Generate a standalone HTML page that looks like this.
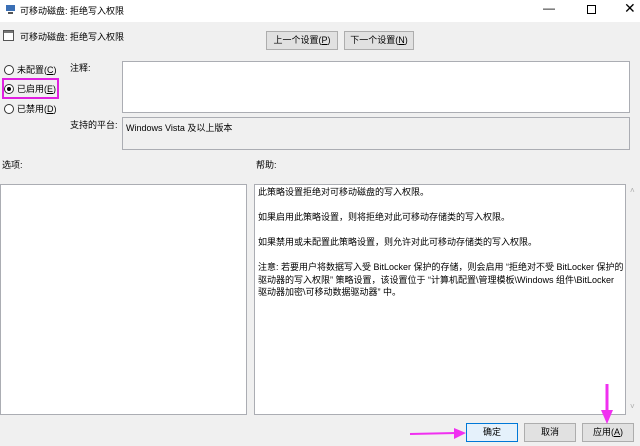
<!DOCTYPE html>
<html><head><meta charset="utf-8"><style>
*{margin:0;padding:0;box-sizing:border-box}
body{width:640px;height:446px;background:#f0f0f0;font-family:"Liberation Sans","Noto Sans CJK SC",sans-serif;font-size:9px;color:#000;position:relative;overflow:hidden}
.a{position:absolute;white-space:nowrap}
.btn{position:absolute;background:#e1e1e1;border:1px solid #adadad;text-align:center;font-size:9px;line-height:17px}
.box{position:absolute;background:#fff;border:1px solid #abadb3}
.r{position:absolute;width:10px;height:10px;border:1px solid #333;border-radius:50%;background:#fff}
u{text-decoration:underline}
</style></head><body>
<div class="a" style="left:0;top:0;width:640px;height:22px;background:#fff"></div>
<svg class="a" style="left:5px;top:4px" width="12" height="11"><rect x="1" y="1" width="9" height="6" fill="#3a6fb5"/><rect x="3" y="8" width="5" height="2" fill="#555"/></svg>
<div class="a" style="left:20px;top:4px">可移动磁盘: 拒绝写入权限</div>
<div class="a" style="left:543px;top:1px;font-size:12px">—</div>
<div class="a" style="left:587px;top:5px;width:9px;height:9px;border:1px solid #000"></div>
<div class="a" style="left:624px;top:0px;font-size:14px">✕</div>
<svg class="a" style="left:3px;top:30px" width="12" height="12"><rect x="0.5" y="0.5" width="10" height="10" fill="#fff" stroke="#555"/><rect x="1" y="1" width="9" height="2" fill="#777"/></svg>
<div class="a" style="left:20px;top:30px">可移动磁盘: 拒绝写入权限</div>
<div class="btn" style="left:266px;top:31px;width:72px;height:19px">上一个设置(<u>P</u>)</div>
<div class="btn" style="left:344px;top:31px;width:70px;height:19px">下一个设置(<u>N</u>)</div>
<div class="r" style="left:4px;top:65px"></div><div class="a" style="left:17px;top:63px">未配置(<u>C</u>)</div>
<div class="r" style="left:4px;top:84px"><div style="position:absolute;left:2px;top:2px;width:4px;height:4px;border-radius:50%;background:#000"></div></div><div class="a" style="left:17px;top:82px">已启用(<u>E</u>)</div>
<div class="a" style="left:2px;top:78px;width:57px;height:21px;border:2px solid #e020e0"></div>
<div class="r" style="left:4px;top:104px"></div><div class="a" style="left:17px;top:102px">已禁用(<u>D</u>)</div>
<div class="a" style="left:70px;top:61px">注释:</div>
<div class="box" style="left:122px;top:61px;width:508px;height:52px"></div>
<div class="a" style="left:70px;top:118px">支持的平台:</div>
<div class="box" style="left:122px;top:117px;width:508px;height:33px;background:#f0f0f0"></div>
<div class="a" style="left:126px;top:121px">Windows Vista 及以上版本</div>
<div class="a" style="left:2px;top:158px">选项:</div>
<div class="a" style="left:256px;top:158px">帮助:</div>
<div class="box" style="left:0;top:184px;width:247px;height:231px"></div>
<div class="box" style="left:254px;top:184px;width:372px;height:231px"></div>
<div class="a" style="left:626px;top:184px;width:14px;height:231px;background:#f0f0f0"></div>
<div class="a" style="left:630px;top:186px;color:#aaa;font-size:8px">˄</div>
<div class="a" style="left:630px;top:402px;color:#aaa;font-size:8px">˅</div>
<div class="a" style="left:258px;top:186px;line-height:12.5px;font-size:9px;white-space:normal;width:368px">此策略设置拒绝对可移动磁盘的写入权限。<br><br>如果启用此策略设置，则将拒绝对此可移动存储类的写入权限。<br><br>如果禁用或未配置此策略设置，则允许对此可移动存储类的写入权限。<br><br>注意: 若要用户将数据写入受 BitLocker 保护的存储，则会启用 “拒绝对不受 BitLocker 保护的<br>驱动器的写入权限” 策略设置，该设置位于 “计算机配置\管理模板\Windows 组件\BitLocker<br>驱动器加密\可移动数据驱动器” 中。</div>
<div class="btn" style="left:466px;top:423px;width:52px;height:19px;border-color:#0078d7;background:#e5f1fb">确定</div>
<div class="btn" style="left:524px;top:423px;width:52px;height:19px">取消</div>
<div class="btn" style="left:582px;top:423px;width:52px;height:19px">应用(<u>A</u>)</div>
<svg class="a" style="left:0;top:0" width="640" height="446"><line x1="410" y1="434" x2="456" y2="433" stroke="#f030f0" stroke-width="2"/><polygon points="454,428 466,433 454,439" fill="#f030f0"/><line x1="607" y1="384" x2="607" y2="412" stroke="#f030f0" stroke-width="3"/><polygon points="601,410 613,410 607,424" fill="#f030f0"/></svg>
</body></html>
